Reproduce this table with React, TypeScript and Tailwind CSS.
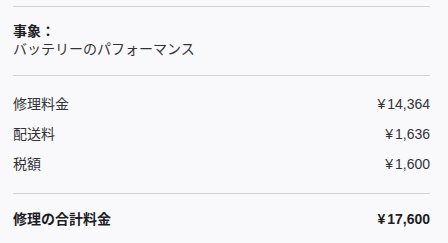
export default function App() {
  const rows = [
    { label: '修理料金', value: '14,364' },
    { label: '配送料', value: '1,636' },
    { label: '税額', value: '1,600' },
  ];

  return (
    <div
      className="w-[448px] h-[243px] bg-[#f9f9fb] pl-[13px] pr-[18px] pt-[6px] text-[14px] text-[#333336]"
      style={{ fontFamily: '"Liberation Sans", "Noto Sans CJK JP", sans-serif' }}
    >
      <div className="border-t border-[#d2d2d7] pt-[15px] pb-[17px] leading-[18px]">
        <div className="font-bold text-[#1d1d1f]">事象：</div>
        <div>バッテリーのパフォーマンス</div>
      </div>

      <div className="border-t border-[#d2d2d7] pt-[19px] pb-[20px] flex flex-col gap-[12px]">
        {rows.map(r => (
          <div key={r.label} className="flex justify-between leading-[18px]">
            <span>{r.label}</span>
            <span>
              <span className="mr-[2px]">¥</span>
              {r.value}
            </span>
          </div>
        ))}
      </div>

      <div className="border-t border-[#d2d2d7] pt-[16px] flex justify-between leading-[18px] font-bold text-[#1d1d1f]">
        <span>修理の合計料金</span>
        <span>
          <span className="mr-[2px]">¥</span>17,600
        </span>
      </div>
    </div>
  );
}
